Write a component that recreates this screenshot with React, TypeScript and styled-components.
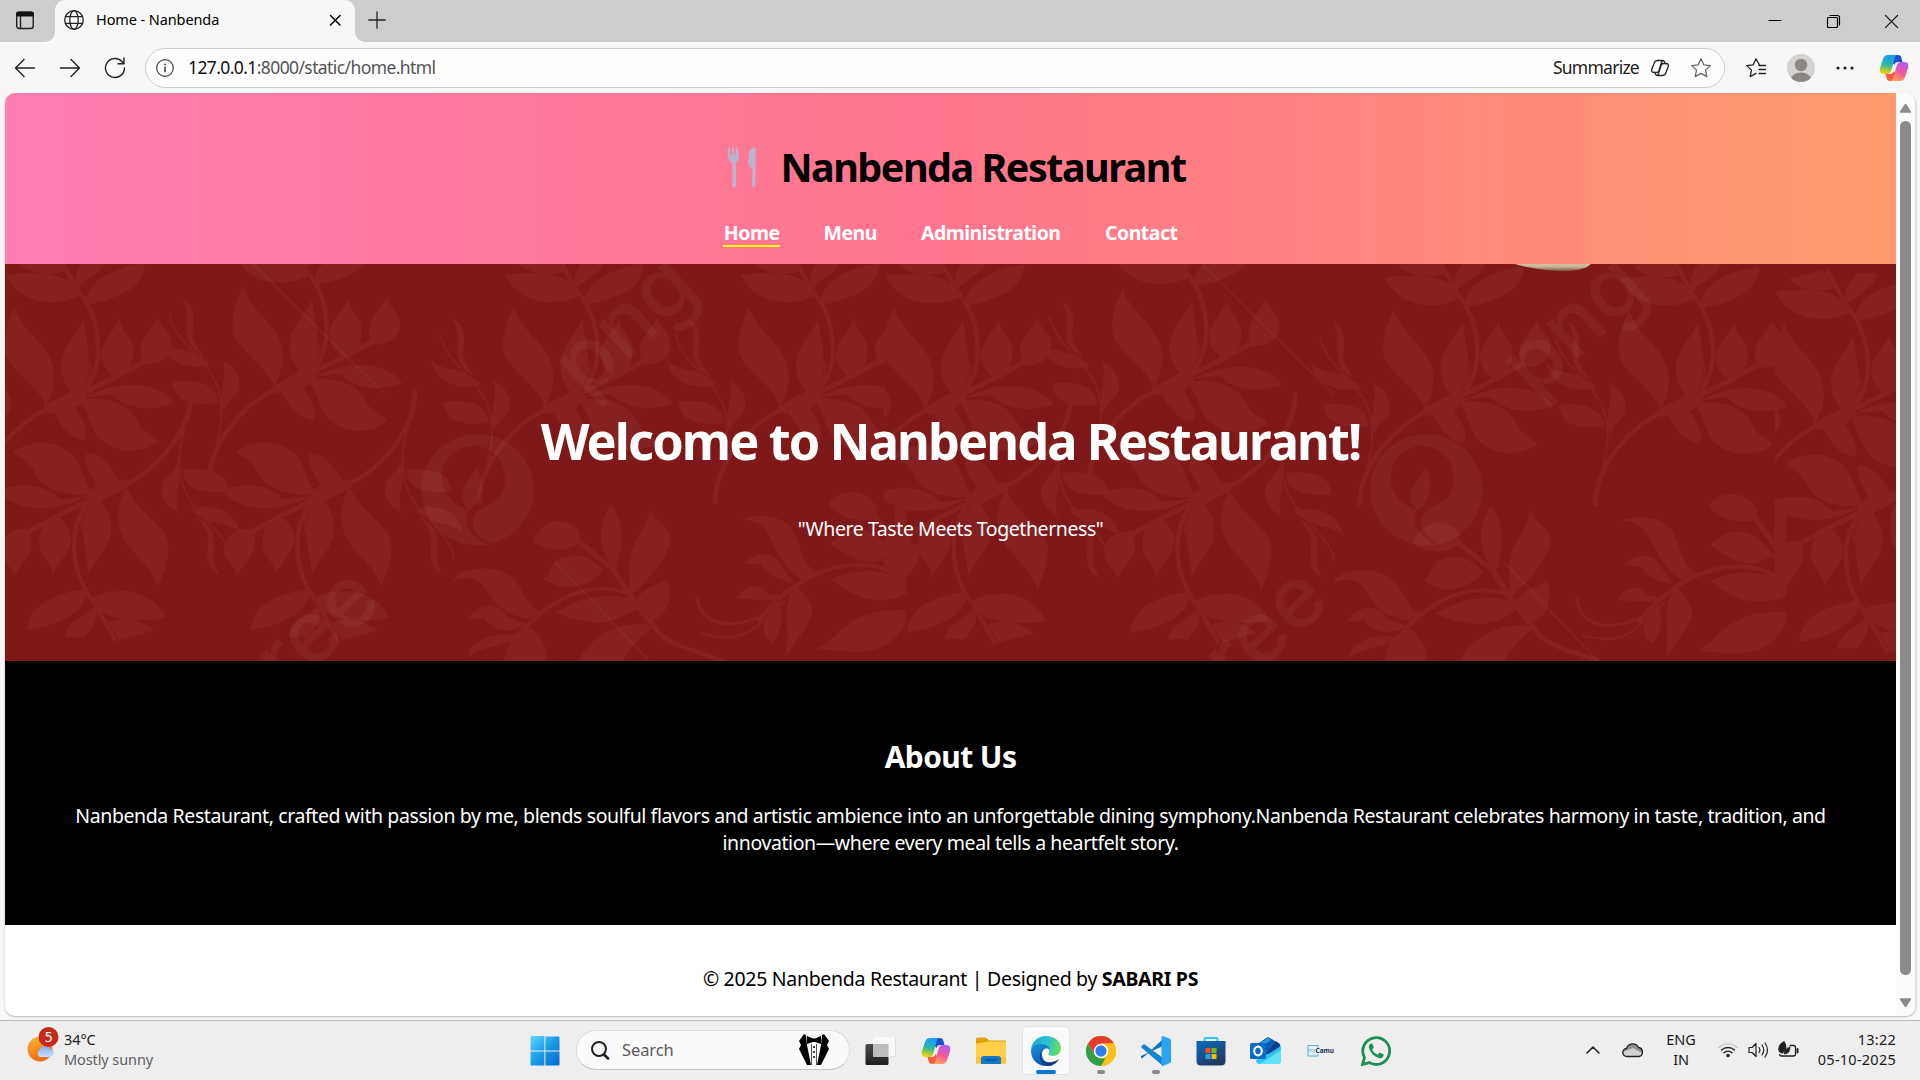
import React from "react";
import styled, { createGlobalStyle } from "styled-components";

const UI = `"Noto Sans", "Open Sans", sans-serif`;

const GlobalStyle = createGlobalStyle`
  *, *::before, *::after { box-sizing: border-box; }
  html, body { margin: 0; padding: 0; overflow: hidden; }
  body { font-family: ${UI}; background: #f7f7f7; color: #000; }
  svg { display: block; flex: none; }
`;

const Screen = styled.div`
  width: 1920px;
  height: 1080px;
  display: flex;
  flex-direction: column;
  background: #f7f7f7;
  overflow: hidden;
`;

/* ---------- browser chrome ---------- */

const TabStrip = styled.div`
  height: 42px;
  display: flex;
  background: #f7f7f7;
`;

const TabActions = styled.div`
  width: 55px;
  height: 42px;
  padding: 10px 0 0 15px;
  background: #cdcdcd;
  border-bottom-right-radius: 10px;
`;

const TabBack = styled.div`
  width: 300px;
  background: linear-gradient(#cdcdcd 50%, #f7f7f7 50%);
`;

const Tab = styled.div`
  height: 42px;
  display: flex;
  align-items: center;
  padding: 0 12px 2px 9px;
  background: #f7f7f7;
  border-radius: 10px 10px 0 0;
`;

const TabTitle = styled.span`
  flex: 1;
  margin: -2px 0 0 12px;
  font-size: 14.5px;
  line-height: 20px;
  letter-spacing: -0.1px;
`;

const StripRest = styled.div`
  flex: 1;
  display: flex;
  justify-content: space-between;
  padding: 11px 19px 0 13px;
  background: #cdcdcd;
  border-bottom-left-radius: 10px;
`;

const WindowControls = styled.div`
  display: flex;
  gap: 38px;
`;

const Toolbar = styled.div`
  height: 51px;
  display: flex;
  align-items: center;
  padding-left: 14px;
`;

const NavButtons = styled.div`
  flex: none;
  width: 131px;
  display: flex;
  gap: 23px;
`;

const AddressBar = styled.div`
  flex: none;
  width: 1580px;
  height: 40px;
  display: flex;
  align-items: center;
  padding: 0 12px 0 10px;
  background: #fdfdfd;
  border: 1px solid #cecece;
  border-radius: 20px;
`;

const Url = styled.div`
  flex: 1;
  margin: -2px 0 0 14px;
  font-size: 17.5px;
  letter-spacing: -0.6px;
  color: #555;
`;

const Host = styled.span`
  color: #111;
`;

const Summarize = styled.span`
  margin: -2px 11px 0 0;
  font-size: 17.5px;
  letter-spacing: -0.75px;
  color: #222;
`;

const StarSlot = styled.div`
  margin-left: 20px;
`;

const ToolbarRight = styled.div`
  flex: none;
  display: flex;
  align-items: center;
  padding-left: 20px;
`;

const Slot = styled.div<{ $w: number }>`
  flex: none;
  width: ${(p) => p.$w}px;
  display: flex;
  justify-content: center;
`;

/* ---------- web page ---------- */

const PageFrame = styled.div`
  width: 1911px;
  height: 923px;
  margin-left: 5px;
  display: flex;
  background: #fff;
  border-right: 1px solid #dcdcdc;
  border-radius: 10px;
  box-shadow: 0 1px 2px rgba(0, 0, 0, 0.25);
  overflow: hidden;
`;

const Page = styled.main`
  width: 1891px;
  display: flex;
  flex-direction: column;
`;

const SiteHeader = styled.header`
  height: 171px;
  display: flex;
  flex-direction: column;
  align-items: center;
  background: linear-gradient(to right, #ff7eb3, #ff758c 50%, #ff9a6c);
`;

const Brand = styled.h1`
  display: flex;
  align-items: center;
  height: 56px;
  margin: 46px 0 0;
  padding-left: 12px;
  font-size: 39.5px;
  line-height: 56px;
  font-weight: 700;
  letter-spacing: -1.5px;
  white-space: nowrap;
  svg { margin-right: 23px; }
`;

const SiteNav = styled.nav`
  display: flex;
  margin-top: 23px;
  gap: 43.5px;
`;

const NavLink = styled.a<{ $w: number; $active?: boolean }>`
  width: ${(p) => p.$w}px;
  height: 29px;
  display: flex;
  justify-content: center;
  padding-top: 1px;
  font-size: 19.5px;
  line-height: 28px;
  font-weight: 700;
  letter-spacing: -0.5px;
  color: #fff;
  white-space: nowrap;
  border-bottom: 2px solid ${(p) => (p.$active ? "#ffff00" : "transparent")};
`;

const Hero = styled.section`
  position: relative;
  height: 397px;
  display: flex;
  flex-direction: column;
  align-items: center;
  background: #7f1819;
  color: #fff;
  overflow: hidden;
`;

const Backdrop = styled.svg`
  position: absolute;
  inset: 0;
  width: 100%;
  height: 100%;
`;

const HeroTitle = styled.h2`
  position: relative;
  margin: 142px 0 0;
  font-size: 50.5px;
  line-height: 70px;
  font-weight: 700;
  letter-spacing: -1.9px;
  white-space: nowrap;
`;

const Tagline = styled.p`
  position: relative;
  margin: 39px 0 0;
  font-size: 19.5px;
  line-height: 28px;
  letter-spacing: -0.42px;
`;

const About = styled.section`
  height: 264px;
  display: flex;
  flex-direction: column;
  align-items: center;
  background: #000;
  color: #fff;
`;

const AboutTitle = styled.h3`
  margin: 75px 0 0;
  font-size: 30px;
  line-height: 42px;
  font-weight: 700;
  letter-spacing: -0.6px;
`;

const AboutLine = styled.p<{ $top?: number }>`
  margin: ${(p) => p.$top || 0}px 0 0;
  font-size: 19.5px;
  line-height: 27px;
  letter-spacing: -0.4px;
  white-space: nowrap;
`;

const SiteFooter = styled.footer`
  height: 90px;
  padding-top: 40px;
  font-size: 19.5px;
  line-height: 28px;
  letter-spacing: -0.3px;
  text-align: center;
`;

const Scrollbar = styled.div`
  flex: 1;
  display: flex;
  flex-direction: column;
  align-items: center;
  justify-content: space-between;
  padding: 10px 0 8px;
  background: #fcfcfc;
`;

const Thumb = styled.div`
  width: 11px;
  height: 854px;
  margin-bottom: 15px;
  border-radius: 6px;
  background: #8b8b8b;
`;

/* ---------- taskbar ---------- */

const Taskbar = styled.div`
  height: 60px;
  margin-top: auto;
  display: flex;
  align-items: center;
  background: #eeeeee;
  border-top: 1px solid #bdbdbd;
`;

const Weather = styled.div`
  width: 517px;
  height: 59px;
  display: flex;
  padding: 6px 0 0 26px;
`;

const TwoLines = styled.div<{ $align?: string; $ls?: number }>`
  display: flex;
  flex-direction: column;
  margin-top: -2px;
  text-align: ${(p) => p.$align || "left"};
  font-size: 14.5px;
  line-height: 20px;
  letter-spacing: ${(p) => p.$ls ?? -0.1}px;
  color: #1b1b1b;
  white-space: nowrap;
`;

const Muted = styled.span`
  color: #5f5f5f;
`;

const WeatherText = styled.div`
  margin: 4px 0 0 5px;
`;

const SearchBox = styled.div`
  width: 274px;
  height: 40px;
  margin: 0 3px 2px 4px;
  display: flex;
  align-items: center;
  padding: 0 20px 0 13px;
  background: #fafafa;
  border: 1px solid #dcdcdc;
  border-bottom-color: #c4c4c4;
  border-radius: 20px;
`;

const SearchText = styled.span`
  flex: 1;
  margin-left: 12px;
  font-size: 16.5px;
  letter-spacing: -0.1px;
  color: #5a5a5a;
`;

const AppSlot = styled.div`
  width: 55px;
  display: flex;
  justify-content: center;
`;

const AppTile = styled.div<{ $active?: boolean }>`
  width: 48px;
  height: 49px;
  display: flex;
  flex-direction: column;
  align-items: center;
  justify-content: space-between;
  padding-top: 9px;
  border-radius: 5px;
  border: 1px solid ${(p) => (p.$active ? "#e2e2e2" : "transparent")};
  background: ${(p) => (p.$active ? "#f9f9f9" : "transparent")};
`;

const Marker = styled.div<{ $kind?: "active" | "open" }>`
  width: ${(p) => (p.$kind === "active" ? 20 : 8)}px;
  height: 4px;
  border-radius: 2px;
  background: ${(p) => (p.$kind === "active" ? "#0a78d4" : p.$kind === "open" ? "#8a8a8a" : "transparent")};
`;

const Tray = styled.div`
  margin-left: auto;
  height: 59px;
  display: flex;
  align-items: center;
  padding: 0 24px 2px 0;
`;

const Clock = styled.div`
  width: 89px;
  display: flex;
  justify-content: flex-end;
`;

/* ---------- icons ---------- */

const Line: React.FC<{ w: number; h?: number; sw?: number; c?: string; children: React.ReactNode }> = ({
  w, h = w, sw = 1.4, c = "#222", children,
}) => (
  <svg width={w} height={h} viewBox={`0 0 ${w} ${h}`} fill="none" stroke={c} strokeWidth={sw} strokeLinecap="round" strokeLinejoin="round">
    {children}
  </svg>
);

const CopilotIcon = ({ id }: { id: string }) => (
  <svg width="30" height="28" viewBox="0 0 30 28">
    <defs>
      <linearGradient id={`${id}a`} x1="0.5" y1="0" x2="0.3" y2="1">
        <stop offset="0.1" stopColor="#1b9ff0" />
        <stop offset="0.5" stopColor="#2cb6a0" />
        <stop offset="0.78" stopColor="#9ccb3c" />
        <stop offset="1" stopColor="#ffcf1a" />
      </linearGradient>
      <linearGradient id={`${id}b`} x1="0.7" y1="0" x2="0.3" y2="1">
        <stop offset="0" stopColor="#b15df0" />
        <stop offset="0.5" stopColor="#f0569c" />
        <stop offset="1" stopColor="#ffa458" />
      </linearGradient>
    </defs>
    <path d="M15 1h4c2 0 2.8 1 3.3 2.8L23.500 8H19c-2 0-3 1-3.600 3L13 8z" fill="#1d4fd0" />
    <path d="M15 27h-4c-2 0-2.800-1-3.300-2.800L6.500 20H11c2 0 3-1 3.600-3L17 20z" fill="#f4603c" />
    <path d="M9.500 1H19c-1.800 0-2.700 1.200-3.300 3L12.300 16.500c-.7 2.300-2 3.500-4.300 3.500H4.500C1 20 .2 17 1 14L4 5C4.900 2.500 6.500 1 9.500 1z" fill={`url(#${id}a)`} />
    <path d="M20.500 27H11c1.800 0 2.700-1.200 3.300-3l3.400-12.500C18.400 9.200 19.700 8 22 8h3.500c3.500 0 4.300 3 3.500 6l-3 9c-.9 2.500-2.500 4-5.500 4z" fill={`url(#${id}b)`} />
  </svg>
);

const CutleryIcon = () => (
  <svg width="30" height="42" viewBox="0 0 30 42" fill="#b9b4cc">
    <path d="M1 2q1-1.500 1.800 0l.4 7h1.300l.5-7q1-1.500 2 0v7h1.300l.6-7q1-1.500 1.900 0L12 9c.2 4-1 6-3.200 8L9.200 40q-2 3-4 0L5.400 17C2 15 1 13 1 9z" />
    <path d="M28.500 1c-4 0-7 4-7 9v7c0 3 1.500 5 4 6l-.5 17q1.500 3 3.500 0z" />
  </svg>
);

const WindowsIcon = () => (
  <svg width="30" height="30" viewBox="0 0 30 30">
    <defs>
      <linearGradient id="win" x1="0" y1="0" x2="1" y2="1">
        <stop offset="0" stopColor="#5fd7ff" /><stop offset="0.5" stopColor="#1a9be8" /><stop offset="1" stopColor="#0067cc" />
      </linearGradient>
    </defs>
    <path fill="url(#win)" d="M1.500 0H14.400v14.400H.5V1.500Q.5.500 1.500.500zM15.400.5H28.500q1 0 1 1v12.900H15.400zM.5 15.400h13.900v14.100H1.500q-1 0-1-1zM15.400 15.400h14.100v13.100q0 1-1 1H15.400z" />
  </svg>
);

const TuxedoIcon = () => (
  <svg width="30" height="33" viewBox="0 0 30 33">
    <path d="M7 3h16l2 28H5z" fill="#fff" />
    <path d="M5 1 0 8l2 4-2 4 8 16h4L8 12 7 2zM25 1l5 7-2 4 2 4-8 16h-4l4-20 1-10z" fill="#000" />
    <path d="m8 3 6 2.500h2L22 3v8l-6-2h-2l-6 2z" fill="#000" />
    <path d="M12.500 11v21M17.500 11v21" stroke="#555" strokeWidth="1" />
    <path d="M15 13v2M15 18v2M15 23v2" stroke="#111" strokeWidth="1.600" />
  </svg>
);

const TaskViewIcon = () => (
  <svg width="31" height="30" viewBox="0 0 31 30">
    <defs>
      <linearGradient id="tv" x1="0" y1="0" x2="0" y2="1"><stop offset="0" stopColor="#4a4a4a" /><stop offset="1" stopColor="#1f1f1f" /></linearGradient>
    </defs>
    <rect x="0.500" y="8" width="23" height="21" rx="1.500" fill="url(#tv)" />
    <rect x="8" y="1" width="22.500" height="20" rx="1.500" fill="#f8f8f8" fillOpacity="0.950" />
    <path d="M8 8h15.500v13H9.500Q8 21 8 19.500z" fill="#bdbdbd" />
    <path d="M23.500 21H29q1.500 0 1.500-1.500V2" stroke="#ddd" fill="none" />
  </svg>
);

const FolderIcon = () => (
  <svg width="30" height="28" viewBox="0 0 30 28">
    <path d="M0 2Q0 .5 1.500.5H9q1 0 2 1l2 2H30V9H0z" fill="#e0a100" />
    <path d="M0 6.500 12 4.500H30v22H0z" fill="#ffcf48" />
    <path d="M0 20h30v6.500H0z" fill="#fbc233" />
    <path d="M5 27v-5q0-3 3-3h14q3 0 3 3v5z" fill="#1379c8" />
    <path d="M9 23h12" stroke="#0a4c8f" strokeWidth="1.300" />
  </svg>
);

const EdgeIcon = () => (
  <svg width="30" height="30" viewBox="0 0 30 30">
    <defs>
      <linearGradient id="e1" x1="0" y1="0.300" x2="1" y2="0.500"><stop offset="0" stopColor="#1fa7e0" /><stop offset="0.550" stopColor="#2cc3cc" /><stop offset="1" stopColor="#69e05a" /></linearGradient>
      <linearGradient id="e2" x1="0" y1="0" x2="0.500" y2="1"><stop offset="0" stopColor="#1492dd" /><stop offset="1" stopColor="#0f58b0" /></linearGradient>
    </defs>
    <path d="M0 15C0 6 7 0 15 0s15 5 15 12c0 5-4 8-8 8-3 0-5-1-4.500-2.500C20 14 17 9 11 9 5 9 1 12 0 15z" fill="url(#e1)" />
    <path d="M0 15C1 10 5 8 10 8c5 0 9 3 9 6-3-3-8-1-8 4 0 6 5 11 11 11-2 .8-4 1-7 1C6 30 0 23 0 15z" fill="url(#e2)" />
    <path d="M12 14c-4 4-2 11 4 12 5 1 9-1 12-3-2 4-6 7-12 7C9 28 6 19 12 14z" fill="#0c3f86" />
  </svg>
);

const ChromeIcon = () => (
  <svg width="30" height="30" viewBox="0 0 30 30">
    <circle cx="15" cy="15" r="15" fill="#fbc116" />
    <path d="M2 7.500A15 15 0 0 1 28 7.500H15L8.500 18.800z" fill="#e33b2e" />
    <path d="M2 7.500 8.500 18.800Q11 22 15 22.500h6.500L15 30A15 15 0 0 1 2 7.500z" fill="#2f9e4c" />
    <path d="M21.500 18.800 15 30A15 15 0 0 0 28 7.500H15z" fill="#fbc116" />
    <circle cx="15" cy="15" r="7.200" fill="#fff" /><circle cx="15" cy="15" r="5.700" fill="#2f7de9" />
  </svg>
);

const CodeIcon = () => (
  <svg width="30" height="30" viewBox="0 0 30 30">
    <path d="M22 0 4.500 16.500 1.500 19q-1 .5-1.500 0l-.1-2L22 7z" fill="#0f6fb8" transform="translate(0 3)" />
    <path d="M22 30 1 12q-1.500-1 0-2.500l1-.8q1-.5 2 0L22 22z" fill="#1485cf" />
    <path d="M22 0l7 3q1 .5 1 1.500v21q0 1-1 1.500l-7 3q-1 0-1.500-1V1q.5-1 1.500-1z" fill="#2aa3f0" />
  </svg>
);

const StoreIcon = () => (
  <svg width="30" height="30" viewBox="0 0 30 30">
    <defs><linearGradient id="st" x1="0" y1="0" x2="0.500" y2="1"><stop offset="0" stopColor="#0b6cbd" /><stop offset="1" stopColor="#223a66" /></linearGradient></defs>
    <path d="M8.500 6V3q0-1 1-1h11q1 0 1 1v3" fill="none" stroke="#30c3f2" strokeWidth="2" />
    <path d="M.5 5h29v20q0 4.500-4.500 4.500H5Q.5 29.500.5 25z" fill="url(#st)" />
    <path d="M9.500 12h5v5h-5z" fill="#f25022" /><path d="M15.500 12h5v5h-5z" fill="#7fba00" />
    <path d="M9.500 18h5v5h-5z" fill="#19a7f2" /><path d="M15.500 18h5v5h-5z" fill="#ffb900" />
  </svg>
);

const OutlookIcon = () => (
  <svg width="31" height="28" viewBox="0 0 31 28">
    <path d="M6 8 17 .5q1-.6 2 0L30 7v5L16 18H6z" fill="#0b5bb5" />
    <path d="M10 6 18 1l3 2L10 11z" fill="#2f93e0" />
    <path d="M16 17 26 4l4.500 4-9 9z" fill="#083e91" />
    <path d="M15 19 31 9v14q0 4-4 4H10q-4 0-4-4z" fill="#2cc4f0" />
    <path d="M10 27 31 13v11q0 3-4 3z" fill="#62e2fa" />
    <rect x="0" y="6" width="16" height="16" rx="1.500" fill="#0d6bc7" />
    <ellipse cx="8" cy="14" rx="3.800" ry="4.400" fill="none" stroke="#fff" strokeWidth="2.200" />
  </svg>
);

const CamuIcon = () => (
  <svg width="28" height="14" viewBox="0 0 28 14">
    <path d="M11 4.500V1.500H1v10.500h10V10" fill="none" stroke="#4fb3e0" strokeWidth="1" />
    <text x="1.500" y="8" fontSize="5" fill="#4fb3e0" fontFamily="Noto Sans">my</text>
    <text x="8.500" y="9.300" fontSize="7" fontWeight="700" fill="#1f2c56" fontFamily="Noto Sans" textLength="18.500" lengthAdjust="spacingAndGlyphs">Camu</text>
  </svg>
);

const WhatsAppIcon = () => (
  <svg width="30" height="30" viewBox="0 0 30 30">
    <path d="M1.500 28.500 3.500 21.500A13.400 13.400 0 1 1 8.500 26.600z" fill="none" stroke="#1d8f57" strokeWidth="2.800" />
    <path d="M10 7.500c-2 1-2.800 3-1.800 5.500 2 4.500 5 7.500 9.500 9 2.500.8 5-.5 5-3.500l-4-2-2 2.200c-2.500-1-4.300-2.700-5.500-5.200l1.700-2L11.300 7.700z" fill="#1d8f57" />
  </svg>
);

const WeatherIcon = () => (
  <svg width="33" height="36" viewBox="0 0 33 36">
    <defs>
      <linearGradient id="sun" x1="0.300" y1="0" x2="0.600" y2="1"><stop offset="0" stopColor="#f2b632" /><stop offset="1" stopColor="#f2640f" /></linearGradient>
      <linearGradient id="cl" x1="0" y1="0" x2="0" y2="1"><stop offset="0" stopColor="#83aef2" /><stop offset="1" stopColor="#c9ddfb" /></linearGradient>
    </defs>
    <circle cx="14" cy="22" r="12.500" fill="url(#sun)" />
    <path d="M14 30a4 4 0 0 1-.5-7 5.500 5.500 0 0 1 10-1.500A4.500 4.500 0 0 1 25 30z" fill="url(#cl)" />
    <circle cx="22.500" cy="10" r="10" fill="#c42b1c" />
    <text x="22.500" y="15" fontSize="13.500" textAnchor="middle" fill="#fff" fontFamily="Noto Sans">5</text>
  </svg>
);

/* ---------- damask backdrop ---------- */

const SprayShape = () => (
  <g id="spray">
    <path d="M35 140C15 195-5 270 25 310 55 355 95 385 112 440 138 385 142 320 110 268 85 225 52 200 35 140z" />
    <path d="M205 178C180 240 150 260 150 320 152 370 170 385 185 412 212 380 222 330 218 290 214 240 208 220 205 178z" />
    <path d="M293 177C270 230 245 250 248 290 252 330 275 345 290 357 320 335 330 290 325 255 318 225 298 215 293 177z" />
    <path d="M388 172C365 220 343 235 344 275L350 312C395 318 415 290 420 262 424 215 395 210 388 172z" />
    <path d="M208 412C280 362 385 358 426 430 360 460 300 440 275 402z" />
    <path d="M190 418C280 408 322 440 340 490 355 525 385 530 388 545 345 585 275 580 240 530 215 490 220 450 190 418z" />
    <path d="M130 455C150 500 175 540 210 540 218 500 200 480 180 435z" />
    <path d="M105 440 185 388 215 410 190 440 120 462z" />
    <g fill="none" stroke="#862122" strokeLinecap="round">
      <path d="M-48 725C-45 600 40 490 118 446" strokeWidth="12" />
      <path d="M195 405 280 352 372 292" strokeWidth="15" />
      <path d="M205 395C262 310 245 170 190 90L140-20" strokeWidth="11" />
      <path d="M222 310Q225 350 200 400" strokeWidth="5" />
      <path d="M-144 225C-130 320-25 370-20 480-10 560-30 600-45 700" strokeWidth="5" />
    </g>
    <path d="M14 45C70 35 160 30 192 90L195 108C160 130 60 155 14 45z" />
    <path d="M210 135C205 60 290 20 355 10 350 90 290 115 210 135z" />
    <path d="M190 85C175 40 200 10 215-10L262-10C260 35 215 50 190 85z" />
    <path d="M45 8C80 50 135 45 158 34L130-20z" />
    <path d="M-115 178C-80 190-85 240-88 280-88 310-70 330-60 350-95 330-105 300-103 260-98 220-105 200-115 178z" />
    <path d="M-168 300C-130 340-80 320-45 375-90 388-150 380-168 300z" />
    <path d="M-138 425C-95 420-30 420-25 490-90 495-130 490-138 425z" />
    <path d="M-15 360C25 385 35 430 20 460 5 480-5 490-12 515-30 460 0 420-15 360z" />
  </g>
);

const BranchShape = () => (
  <g id="branch">
    <path d="M130 1000C140 950 255 945 285 1000 310 1045 315 1075 345 1090L315 1112C250 1095 235 1070 212 1025 190 985 160 980 130 1000z" />
    <path d="M516 768C490 820 480 870 515 950L530 962C550 870 550 820 516 768z" />
    <path d="M613 780C605 850 560 880 562 960L562 1045C625 980 668 900 662 865 655 825 622 820 613 780z" />
    <path d="M655 993C630 1012 600 1010 575 1060L612 1118C658 1105 668 1050 655 993z" />
    <path d="M325 882C340 820 400 792 440 850L440 882C400 920 360 905 325 882z" />
    <path d="M352 992C382 960 362 928 422 921 470 920 480 950 500 965 460 1020 400 1035 352 992z" />
    <path d="M380 1090C430 1065 450 1032 558 1048L580 1078C520 1140 450 1130 380 1090z" />
    <path d="M165 1115C190 1060 245 1062 262 1105L315 1130C270 1150 240 1160 205 1110z" />
    <path d="M165 1228C180 1155 255 1155 292 1162 250 1200 200 1190 165 1228z" />
    <path d="M312 1130C272 1160 258 1200 255 1245L358 1245C365 1190 340 1155 312 1130z" />
    <path d="M435 1250C455 1170 540 1108 622 1132 600 1160 570 1180 540 1250z" />
    <g fill="none" stroke="#862122" strokeLinecap="round">
      <path d="M260 1240C290 1140 340 1090 400 1050 450 1018 510 1012 560 1035" strokeWidth="12" />
      <path d="M430 872 520 960C560 1030 580 1080 620 1130 650 1200 730 1200 800 1245" strokeWidth="14" />
    </g>
  </g>
);

const SmallBranchShape = () => (
  <g id="smallBranch">
    <path d="M836 812C870 795 940 795 965 850 985 905 985 950 1022 970L995 1000C940 960 930 920 905 865 890 825 865 815 836 812z" />
    <path d="M845 945C870 905 920 905 935 955L965 1005C925 990 900 985 885 950z" />
    <path d="M825 1052C850 1000 885 1005 900 1035L945 1045C905 1065 870 1050 825 1052z" />
    <path d="M970 1010C930 1070 960 1130 945 1225 975 1170 1010 1120 1010 1085 1005 1050 985 1030 970 1010z" />
    <path d="M925 1060C885 1110 880 1160 912 1182 940 1140 940 1100 925 1060z" />
    <path d="M1055 992C1110 965 1150 960 1215 980L1240 955V1038C1180 1070 1120 1060 1055 992z" />
    <path d="M1050 770C1070 715 1150 720 1168 780V812C1120 820 1085 815 1050 770z" />
    <path d="M1052 885C1080 870 1075 845 1130 845 1180 855 1185 890 1215 915L1180 932C1130 960 1100 920 1052 885z" />
    <path d="M1212 770 1240 740V880L1280 890C1270 950 1250 1000 1212 985z" />
    <path d="M1020 1200C1080 1180 1080 1080 1240 1085V1120C1200 1220 1130 1220 1020 1200z" />
    <g fill="none" stroke="#862122" strokeLinecap="round">
      <path d="M880 1115C920 1050 990 980 1060 960 1120 940 1180 950 1212 978" strokeWidth="12" />
      <path d="M728 1048C735 1150 850 1150 940 1060" strokeWidth="9" />
      <path d="M740 1155C790 1175 850 1175 890 1115" strokeWidth="7" />
      <path d="M1165 805 1225 910" strokeWidth="14" />
    </g>
  </g>
);

/* Three vertical strips; each one cuts its sprays off at the seam. */
const strips = [
  { x: 0, w: 2168, sprays: [[0, 0], [560, -60], [1223, 0], [1800, 0]], hanging: [[0, 0], [547, 0]] },
  { x: 2165, w: 2211, sprays: [[2155, 3], [2715, -55], [3379, 8], [3956, 10]], hanging: [[2155, 8], [2703, 8]] },
  { x: 4348, w: 320, sprays: [[4336, 50]], hanging: [[4341, 35]] },
];

const Watermark = ({ dx }: { dx: number }) => (
  <g transform={`translate(${dx} 0)`} fill="#fff" fillOpacity="0.045">
    <path fillRule="evenodd" d="M1170 522a138 167 0 1 0 .1 0zM1160 557C1205 557 1237 600 1237 655 1237 720 1205 728 1180 745 1150 765 1155 800 1170 825L1200 850 1190 852C1150 825 1130 790 1150 748 1110 740 1083 700 1083 650 1083 600 1115 557 1160 557z" />
    <path d="M1170 622C1150 660 1130 680 1132 710 1134 730 1142 740 1152 750 1180 720 1190 680 1170 622z" />
    <g fontFamily="Inter, sans-serif" fontSize="86" fontWeight="500">
      <text transform="translate(1436 418) scale(2.45 3) rotate(-43)">png</text>
      <text transform="translate(704 1302) scale(2.45 3) rotate(-43)">ree</text>
    </g>
    <path d="M620 12 945 405M1360 905 1600 1215" stroke="#fff" strokeOpacity="0.040" strokeWidth="5" fill="none" />
  </g>
);

const Damask = () => (
  <Backdrop viewBox="12.25 12 4633 1191" preserveAspectRatio="none" fill="#862122">
    <defs>
      <linearGradient id="plate" x1="0" y1="0" x2="0" y2="1"><stop offset="0" stopColor="#d8c7b0" /><stop offset="0.500" stopColor="#c9b08f" /><stop offset="1" stopColor="#7c4a38" /></linearGradient>
      <SprayShape />
      <BranchShape />
      <SmallBranchShape />
      {strips.map((s) => (
        <clipPath key={s.x} id={`strip${s.x}`}><rect x={s.x} y="0" width={s.w} height="1300" /></clipPath>
      ))}
    </defs>
    {strips.map((s) => (
      <g key={s.x} clipPath={`url(#strip${s.x})`}>
        {s.sprays.map(([x, y]) => <use key={x} href="#spray" x={x} y={y} />)}
        {s.hanging.map(([x, y]) => <use key={x} href="#spray" transform={`matrix(-1 0 0 -1 ${422 + x} ${1120 + y})`} />)}
      </g>
    ))}
    <g transform="translate(3136 -30)">
      <use href="#branch" />
      <use href="#branch" x="-2156" y="-5" />
      <use href="#smallBranch" />
      <use href="#smallBranch" x="-2156" y="-5" />
    </g>
    <Watermark dx={0} />
    <Watermark dx={2324} />
    <path d="M3700 8C3760 30 3810 35 3845 33 3875 30 3893 22 3900 8z" fill="url(#plate)" />
  </Backdrop>
);

/* ---------- app ---------- */

const apps: { name: string; icon: React.ReactNode; kind?: "active" | "open" }[] = [
  { name: "task-view", icon: <TaskViewIcon /> },
  { name: "copilot", icon: <CopilotIcon id="task" /> },
  { name: "files", icon: <FolderIcon /> },
  { name: "edge", icon: <EdgeIcon />, kind: "active" },
  { name: "chrome", icon: <ChromeIcon />, kind: "open" },
  { name: "code", icon: <CodeIcon />, kind: "open" },
  { name: "store", icon: <StoreIcon /> },
  { name: "outlook", icon: <OutlookIcon /> },
  { name: "camu", icon: <CamuIcon /> },
  { name: "whatsapp", icon: <WhatsAppIcon /> },
];

const IconBox = styled.div`
  height: 30px;
  display: flex;
  align-items: center;
`;

export default function App() {
  return (
    <Screen>
      <GlobalStyle />
      <TabStrip>
        <TabActions>
          <Line w={20}><rect x="1.700" y="2" width="16.500" height="16.500" rx="2.500" /><path d="M2 2.800h16v3H2z" fill="#111" stroke="#111" /><path d="M5.500 6v12" /></Line>
        </TabActions>
        <TabBack>
          <Tab>
            <Line w={20} sw={1.300}><circle cx="10" cy="10" r="9.300" /><ellipse cx="10" cy="10" rx="4.200" ry="9.300" /><path d="M1.500 6.700h17M1.500 13.300h17" /></Line>
            <TabTitle>Home - Nanbenda</TabTitle>
            <Line w={16} sw={1.500} c="#000"><path d="m3.500 3.500 9.500 9.500M13 3.500 3.500 13" /></Line>
          </Tab>
        </TabBack>
        <StripRest>
          <Line w={18} sw={1.300}><path d="M9 .8v16.400M.8 9h16.400" /></Line>
          <WindowControls>
            <Line w={20} sw={1.200} c="#000"><path d="M4 9.500h12" /></Line>
            <Line w={20} sw={1.200} c="#000"><rect x="4.500" y="6.500" width="10" height="10" rx="1" /><path d="M7 4.500h7.500q2 0 2 2V14" /></Line>
            <Line w={20} sw={1.200}><path d="m4.500 4.500 12 12M16.500 4.500l-12 12" /></Line>
          </WindowControls>
        </StripRest>
      </TabStrip>

      <Toolbar>
        <NavButtons>
          <Line w={22}><path d="M20.500 11H1.500M10 2.500 1.500 11l8.500 8.500" /></Line>
          <Line w={22}><path d="M1.500 11h19M12 2.500l8.500 8.500-8.500 8.500" /></Line>
          <Line w={22}><path d="M20.500 11a9.500 9.500 0 1 1-2.300-6.200l1.600 1.800M20 1v5.800h-6" /></Line>
        </NavButtons>
        <AddressBar>
          <Line w={18} c="#444" sw={1.200}><circle cx="9" cy="9" r="8.300" /><path d="M9 8.200v4.500" strokeWidth="1.600" /><path d="M9 5.300v.1" strokeWidth="1.800" /></Line>
          <Url><Host>127.0.0.1</Host>:8000/static/home.html</Url>
          <Summarize>Summarize</Summarize>
          <Line w={20} h={18} sw={1.300}>
            <path d="M12.500 1.500H7.200Q5 1.500 4.300 3.700L1.800 10.300Q1 13.500 4 13.500H6.500Q8.300 13.500 9 11.500L11.300 4Q12 1.500 13.500 1.500 14.500 1.800 15 4.500" />
            <path d="M7.500 16.500h5.300q2.200 0 2.900-2.200l2.500-6.600Q19 4.500 16 4.500H13.500Q11.700 4.500 11 6.500L8.700 14Q8 16.500 6.500 16.500 5.500 16.200 5 13.500" />
          </Line>
          <StarSlot>
            <Line w={22} c="#666" sw={1.300}><path d="m11 1.800 2.800 6 6.500.8-4.800 4.500 1.300 6.500L11 16.400l-5.800 3.200 1.300-6.500L1.700 8.600l6.500-.8z" /></Line>
          </StarSlot>
        </AddressBar>
        <ToolbarRight>
          <Line w={22} sw={1.300}><path d="M14 8.500h6.500M14 12.500h6.500M14 16.500h6.500" /><path d="M14.500 8 11 1.800l-2.800 6-6.500.8 4.800 4.500-1.300 6.500 5.800-3.200" /></Line>
          <Slot $w={68}>
            <svg width="28" height="28" viewBox="0 0 28 28"><defs><clipPath id="av"><circle cx="14" cy="14" r="14" /></clipPath></defs><g clipPath="url(#av)"><path d="M0 0h28v28H0z" fill="#d5d2cf" /><circle cx="14" cy="11" r="6.200" fill="#8b8784" /><ellipse cx="14" cy="26.500" rx="10.500" ry="8" fill="#8b8784" /></g></svg>
          </Slot>
          <Slot $w={20}>
            <svg width="18" height="4" viewBox="0 0 18 4" fill="#222"><circle cx="2" cy="2" r="1.600" /><circle cx="9" cy="2" r="1.600" /><circle cx="16" cy="2" r="1.600" /></svg>
          </Slot>
          <Slot $w={78}><CopilotIcon id="bar" /></Slot>
        </ToolbarRight>
      </Toolbar>

      <PageFrame>
        <Page>
          <SiteHeader>
            <Brand><CutleryIcon />Nanbenda Restaurant</Brand>
            <SiteNav>
              <NavLink $w={57} $active>Home</NavLink>
              <NavLink $w={53}>Menu</NavLink>
              <NavLink $w={141}>Administration</NavLink>
              <NavLink $w={73}>Contact</NavLink>
            </SiteNav>
          </SiteHeader>
          <Hero>
            <Damask />
            <HeroTitle>Welcome to Nanbenda Restaurant!</HeroTitle>
            <Tagline>"Where Taste Meets Togetherness"</Tagline>
          </Hero>
          <About>
            <AboutTitle>About Us</AboutTitle>
            <AboutLine $top={24}>Nanbenda Restaurant, crafted with passion by me, blends soulful flavors and artistic ambience into an unforgettable dining symphony.Nanbenda Restaurant celebrates harmony in taste, tradition, and</AboutLine>
            <AboutLine>innovation—where every meal tells a heartfelt story.</AboutLine>
          </About>
          <SiteFooter>© 2025 Nanbenda Restaurant | Designed by <b>SABARI PS</b></SiteFooter>
        </Page>
        <Scrollbar>
          <svg width="13" height="10" viewBox="0 0 13 10"><path d="M6.500 1.500 11.500 9h-10z" fill="#8b8b8b" stroke="#8b8b8b" strokeLinejoin="round" strokeWidth="1.500" /></svg>
          <Thumb />
          <svg width="13" height="10" viewBox="0 0 13 10"><path d="M6.500 8.500 11.500 1h-10z" fill="#8b8b8b" stroke="#8b8b8b" strokeLinejoin="round" strokeWidth="1.500" /></svg>
        </Scrollbar>
      </PageFrame>

      <Taskbar>
        <Weather>
          <WeatherIcon />
          <WeatherText><TwoLines><span>34°C</span><Muted>Mostly sunny</Muted></TwoLines></WeatherText>
        </Weather>
        <AppSlot><WindowsIcon /></AppSlot>
        <SearchBox>
          <Line w={20} sw={2}><circle cx="9" cy="9" r="7" /><path d="m14 14.500 4 4" strokeWidth="2.600" /></Line>
          <SearchText>Search</SearchText>
          <TuxedoIcon />
        </SearchBox>
        {apps.map((a) => (
          <AppSlot key={a.name}>
            <AppTile $active={a.kind === "active"}>
              <IconBox>{a.icon}</IconBox>
              <Marker $kind={a.kind} />
            </AppTile>
          </AppSlot>
        ))}
        <Tray>
          <Slot $w={40}><Line w={14} h={8} sw={1.600}><path d="m1 7 6-6 6 6" /></Line></Slot>
          <Slot $w={40}>
            <svg width="22" height="16" viewBox="0 0 22 16"><path d="M5 14.500a4 4 0 0 1-.5-8A6.500 6.500 0 0 1 16.500 5.500 4.600 4.600 0 0 1 17 14.500z" fill="#8f8f8f" /><path d="M5 14.500c-3 0-4-3-3-5L11 6l9 5c0 2-1 3.500-3 3.500z" fill="#d2d2d2" /><path d="M5 14.500a4 4 0 0 1-.5-8A6.500 6.500 0 0 1 16.500 5.500 4.600 4.600 0 0 1 17 14.500z" fill="none" stroke="#222" strokeWidth="1.300" /></svg>
          </Slot>
          <Slot $w={56}><TwoLines $align="center"><span>ENG</span><span>IN</span></TwoLines></Slot>
          <Slot $w={38}>
            <Line w={20} h={16} sw={1.400}><path d="M1 5.500a13 13 0 0 1 18 0" stroke="#c2c2c2" /><path d="M3.500 8a9.500 9.500 0 0 1 13 0M6 10.700a6 6 0 0 1 8 0" /><circle cx="10" cy="13.500" r="1.500" fill="#222" strokeWidth="0.500" /></Line>
          </Slot>
          <Slot $w={22}>
            <Line w={21} h={18} sw={1.200}><path d="M1 6.500h3l4-4v13l-4-4H1z" /><path d="M11 6.500q1.800 2.500 0 5M14 4q3.500 5 0 10M17 2q5 7 0 14" /></Line>
          </Slot>
          <Slot $w={38}>
            <Line w={21} h={17} sw={1.300}><path d="M12 4.500h3.500q2 0 2 2v6.500q0 2-2 2H3.500q-1.500 0-2-1.500" /><path d="M19.500 8v3.500" strokeWidth="2" /><path d="M6 .8C1 4 0 7 1.500 10.500L4 12C8 10 9 5 6 .8z" fill="#222" /><path d="M12 6c-4 1-6 4-6 7 4 0 6-2 6-7z" fill="#222" strokeWidth="0.500" /></Line>
          </Slot>
          <Clock><TwoLines $align="right" $ls={0.25}><span>13:22</span><span>05-10-2025</span></TwoLines></Clock>
        </Tray>
      </Taskbar>
    </Screen>
  );
}
